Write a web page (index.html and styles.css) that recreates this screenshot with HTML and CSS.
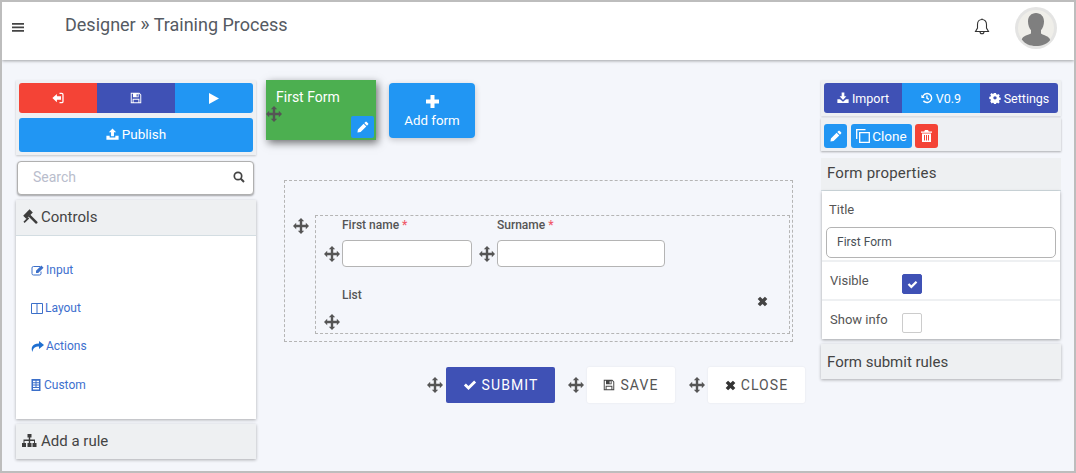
FILE: index.html
```html
<!DOCTYPE html>
<html lang="en">
<head>
<meta charset="utf-8">
<title>Designer</title>
<link rel="stylesheet" href="styles.css">
</head>
<body>
<svg class="defs" width="0" height="0" aria-hidden="true">
  <symbol id="i-move" viewBox="0 0 16 16"><path d="M8 0l3.200 3.200H9.200v3.600h3.600v-2L16 8l-3.200 3.200v-2H9.200v3.600h2L8 16l-3.200-3.200h2V9.200H3.200v2L0 8l3.200-3.200v2h3.600V3.200h-2z"/></symbol>
  <symbol id="i-pencil" viewBox="0 0 16 16"><path d="M11.200 1.200a1.200 1.200 0 0 1 1.700 0l1.900 1.900a1.200 1.200 0 0 1 0 1.700l-1.500 1.500-3.600-3.600zM8.800 3.600l3.600 3.600-7.600 7.600L.6 15.400l.6-4.200z"/></symbol>
  <symbol id="i-check" viewBox="0 0 16 16"><path d="M1 8.500l2.300-2.300 3 3L12.700 2.800 15 5.100 6.300 13.800z"/></symbol>
  <symbol id="i-times" viewBox="0 0 16 16"><path d="M1 4.500L4.500 1 8 4.500 11.500 1 15 4.500 11.500 8 15 11.500 11.500 15 8 11.500 4.500 15 1 11.500 4.500 8z"/></symbol>
  <symbol id="i-save" viewBox="0 0 16 16"><path fill-rule="evenodd" d="M1 1h11.500L15 3.500V15H1zM2.300 2.300v11.400h11.400V4L12 2.300zM4 2.300h7.500v4.700H4zM8.800 3v3h1.500V3zM3.500 9h9v4.700h-9zM4.800 10.300v3.400h6.400v-3.400z"/></symbol>
  <symbol id="i-upload" viewBox="0 0 16 16"><path d="M8 .5l4.500 4.700H9.800v5H6.200v-5H3.500zM.5 9.500h4v2.200h7V9.500h4v5H.5z"/></symbol>
  <symbol id="i-download" viewBox="0 0 16 16"><path d="M6.200.8h3.600v5h2.700L8 10.500 3.500 5.800h2.700zM.5 9.500h3.500L8 13l4-3.500h3.500v5H.5z"/></symbol>
  <symbol id="i-signin" viewBox="0 0 16 16"><path d="M6.500 2.500v3.200H12v4.600H6.500v3.200L.5 8z"/><path d="M10 1h3a2.500 2.500 0 0 1 2.500 2.500v9A2.500 2.500 0 0 1 13 15h-3v-1.700h3a.8.8 0 0 0 .8-.8v-9a.8.8 0 0 0-.8-.8h-3z"/></symbol>
  <symbol id="i-history" viewBox="0 0 16 16"><path d="M8 1a7 7 0 1 1-5.500 11.300l1.500-1.200A5.100 5.100 0 1 0 3.300 6.300L5 8H.5V3.500l1.500 1.500A7 7 0 0 1 8 1z"/><path d="M7 4.500h1.800v3.200l2.200 1.400-1 1.400L7 8.700z"/></symbol>
  <symbol id="i-cog" viewBox="0 0 16 16"><path fill-rule="evenodd" d="M6.500.5h3l.4 2.100 1.300.6 1.800-1.200 2.100 2.100-1.200 1.800.6 1.300 2 .4v3l-2.100.4-.5 1.300 1.200 1.800-2.100 2.100-1.800-1.200-1.300.5-.4 2.100h-3l-.4-2.100-1.300-.5-1.800 1.200L.9 12.800l1.200-1.800-.5-1.300L-.5 9.300v-3l2.100-.4.5-1.300L.9 2.800 3 .7l1.800 1.200 1.300-.5zM8 5.300a2.500 2.500 0 1 0 0 5 2.500 2.500 0 0 0 0-5z" transform="translate(.8 .8) scale(.9)"/></symbol>
</svg>

<header class="topbar">
  <svg class="menu" width="12" height="9" viewBox="0 0 12 9"><path d="M0 0h12v1.800H0zM0 3.500h12v1.800H0zM0 7h12v1.800H0z"/></svg>
  <h1 class="crumb">Designer <span class="sep">»</span> Training Process</h1>
  <svg class="bell" width="16" height="18" viewBox="0 0 16 18"><path d="M8 1.500c-2.800 0-4.500 2.200-4.500 5v3.500L1.500 13.500h13L12.500 10V6.500c0-2.800-1.700-5-4.500-5zM6 13.700a2 2 0 0 0 4 0" fill="none" stroke="#333" stroke-width="1.100"/><path d="M8 .5v1" stroke="#333"/></svg>
  <div class="avatar">
    <svg width="42" height="42" viewBox="0 0 42 42"><circle cx="21" cy="21" r="21" fill="#e4e4e3"/><circle cx="21" cy="21" r="18" fill="#efeee9"/><path d="M21 6c4.800 0 8 3.500 8 8.500 0 3.600-1.300 6.800-3 8.700v3.300c2.500 2 8 2.300 9.200 6.500C32 37 27 39 21 39S10 37 6.800 32.500C8 28.300 13.500 28 16 26.500v-3.300c-1.700-1.900-3-5.100-3-8.700C13 9.500 16.200 6 21 6z" fill="#7f7f7f"/></svg>
  </div>
</header>

<main class="workspace">
  <aside class="col-left">
    <div class="tools">
      <div class="btn-row">
        <button class="seg red"><svg class="ic12"><use href="#i-signin"/></svg></button>
        <button class="seg indigo"><svg class="ic12"><use href="#i-save"/></svg></button>
        <button class="seg blue"><svg width="10" height="11" viewBox="0 0 10 11" class="white"><path d="M0 0l10 5.500L0 11z"/></svg></button>
      </div>
      <button class="publish"><svg class="ic13"><use href="#i-upload"/></svg> Publish</button>
    </div>
    <div class="search">
      <span>Search</span>
      <svg width="12" height="12" viewBox="0 0 12 12"><circle cx="5" cy="5" r="3.700" fill="none" stroke="#444" stroke-width="1.700"/><path d="M7.800 7.800L11 11" stroke="#444" stroke-width="2"/></svg>
    </div>
    <section class="panel">
      <h2 class="panel-head">
        <svg width="16" height="15" viewBox="0 0 16 15"><g fill="#3d3d3d"><rect x="1.500" y="2.800" width="9" height="4.600" transform="rotate(-45 6 5.100)"/><path d="M6.500 7.500l1.800-1.800 7 7a1.300 1.300 0 0 1-1.800 1.800z"/><rect x="0" y="9.300" width="6.500" height="1.700" transform="rotate(-45 3.200 10.100) translate(0 1.500)"/></g></svg>
        Controls
      </h2>
      <ul class="control-list">
        <li><svg width="13" height="11" viewBox="0 0 13 11"><path d="M9 1.500H2.500a1.500 1.500 0 0 0-1.500 1.500v5.500a1.500 1.500 0 0 0 1.500 1.500h6A1.500 1.500 0 0 0 10 8.500V6.500" fill="none" stroke="#3b6fc9"/><path d="M5 5.800L10.300.5l2.200 2.200L7.200 8H5z" fill="#3b6fc9"/></svg>Input</li>
        <li><svg width="12" height="11" viewBox="0 0 12 11"><path d="M.5.500h11v10H.5zM6 .5v10" fill="none" stroke="#3b6fc9"/></svg>Layout</li>
        <li><svg width="13" height="11" viewBox="0 0 13 11"><path d="M8 0l5 4-5 4V5.500C4 5.500 2 7 1.500 11 0 8 0 2.800 8 2.500z" fill="#1f6fd0"/></svg>Actions</li>
        <li class="tight"><svg width="10" height="12" viewBox="0 0 10 12"><path fill-rule="evenodd" d="M.5 0h9v12h-9zM2 1.800v1.400h2.500V1.800zM5.500 1.800v1.400H8V1.800zM2 4.200v1.400h2.500V4.200zM5.500 4.200v1.400H8V4.200zM2 6.600v1.400h2.500V6.600zM5.500 6.600v1.400H8V6.600zM2 9v1.400h6V9z" fill="#3b6fc9"/></svg>Custom</li>
      </ul>
    </section>
    <h2 class="panel-head solo">
      <svg width="15" height="13" viewBox="0 0 15 13"><path d="M5.500 0h4v3.500H8.200v2h4.800V9h1.500v4h-4V9h1.500V7H8.200v2h1.300v4h-4V9h1.300V7H2.500v2H4v4H0V9h1.500V5.500h5.300v-2H5.500z" fill="#3d3d3d"/></svg>
      Add a rule
    </h2>
  </aside>

  <section class="col-center">
    <div class="tabs">
      <div class="form-tab">
        <span class="tab-title">First Form</span>
        <svg class="handle tab-handle"><use href="#i-move"/></svg>
        <button class="tab-edit"><svg class="ic12"><use href="#i-pencil"/></svg></button>
      </div>
      <button class="add-form">
        <svg width="13" height="13" viewBox="0 0 13 13" class="white"><path d="M4.500 0h4v4.500H13v4H8.500V13h-4V8.500H0v-4h4.500z"/></svg>
        <span>Add form</span>
      </button>
    </div>

    <div class="canvas">
      <div class="row-wrap">
        <svg class="handle row-handle"><use href="#i-move"/></svg>
        <div class="row">
          <div class="fields">
            <div class="field f1">
              <label>First name <i>*</i></label>
              <div class="input-line"><svg class="handle"><use href="#i-move"/></svg><div class="box w1"></div></div>
            </div>
            <div class="field f2">
              <label>Surname <i>*</i></label>
              <div class="input-line"><svg class="handle"><use href="#i-move"/></svg><div class="box w2"></div></div>
            </div>
          </div>
          <div class="list-field">
            <label>List</label>
            <svg class="handle list-handle"><use href="#i-move"/></svg>
            <svg class="remove"><use href="#i-times"/></svg>
          </div>
        </div>
      </div>
    </div>

    <div class="actions">
      <svg class="handle"><use href="#i-move"/></svg>
      <button class="action submit"><svg class="ic14"><use href="#i-check"/></svg>SUBMIT</button>
      <svg class="handle gap-l"><use href="#i-move"/></svg>
      <button class="action plain"><svg class="ic12"><use href="#i-save"/></svg>SAVE</button>
      <svg class="handle gap-l2"><use href="#i-move"/></svg>
      <button class="action plain close"><svg class="ic11"><use href="#i-times"/></svg>CLOSE</button>
    </div>
  </section>

  <aside class="col-right">
    <div class="bar">
      <div class="btn-row">
        <button class="seg small indigo"><svg class="ic12"><use href="#i-download"/></svg>Import</button>
        <button class="seg small blue"><svg class="ic12"><use href="#i-history"/></svg>V0.9</button>
        <button class="seg small indigo"><svg class="ic12"><use href="#i-cog"/></svg>Settings</button>
      </div>
    </div>
    <div class="bar grey">
      <button class="mini blue"><svg class="ic12"><use href="#i-pencil"/></svg></button>
      <button class="mini blue wide">
        <svg width="14" height="14" viewBox="0 0 14 14"><path d="M.7 10V.7H9.500M3.700 3.700h9.600v9.600H3.700z" fill="none" stroke="#fff" stroke-width="1.300"/></svg>Clone</button>
      <button class="mini red"><svg width="11" height="12" viewBox="0 0 11 12"><path fill-rule="evenodd" d="M4 0h3l.8 1.500H11v1.300H0V1.500h3.200zM1 3.500h9V12H1zM3 5v5.500h1V5zM5 5v5.500h1V5zM7 5v5.500h1V5z" fill="#fff"/></svg></button>
    </div>
    <h2 class="panel-head prop-head">Form properties</h2>
    <div class="props">
      <div class="prop p-title">
        <label>Title</label>
        <div class="title-input">First Form</div>
      </div>
      <div class="prop p-check">
        <label>Visible</label>
        <span class="check on"><svg class="ic11"><use href="#i-check"/></svg></span>
      </div>
      <div class="prop p-check p-last">
        <label>Show info</label>
        <span class="check"></span>
      </div>
    </div>
    <h2 class="panel-head solo prop-foot">Form submit rules</h2>
  </aside>
</main>
</body>
</html>
```

FILE: styles.css
```css
* { box-sizing: border-box; }
html, body { height: 100%; }
body {
  margin: 0;
  height: 473px;
  overflow: hidden;
  border: 2px solid #bdbdbd;
  background: #f4f6fb;
  font-family: Roboto, "Liberation Sans", sans-serif;
  color: #495057;
}
button { font-family: inherit; border: 0; padding: 0; cursor: pointer; color: #fff; }
h1, h2, ul { margin: 0; padding: 0; font-weight: 400; }
li { list-style: none; }
.defs { position: absolute; }
.white { fill: #fff; }
.ic11 { width: 11px; height: 11px; }
.ic12 { width: 12px; height: 12px; fill: #fff; }
.ic13 { width: 13px; height: 13px; fill: #fff; }
.ic14 { width: 14px; height: 14px; fill: #fff; }

.topbar {
  height: 58px;
  background: #fff;
  box-shadow: 0 1px 3px rgba(0,0,0,.35);
  display: flex;
  align-items: flex-start;
  position: relative;
}
.menu { fill: #444; margin: 21px 0 0 10px; }
.crumb { font-size: 18px; line-height: 24px; margin: 11px 0 0 41px; color: #555a62; flex: 1; }
.sep { font-size: 20px; line-height: 1; }
.bell { margin: 16px 25px 0 0; }
.avatar { margin: 5px 17px 0 0; width: 42px; height: 42px; }
.avatar svg { display: block; }

.workspace { display: flex; align-items: flex-start; padding: 20px 13px 0 14px; }

.col-left { width: 240px; flex: none; }
.tools { background: #eef0f3; padding: 3px; box-shadow: 0 1px 2px rgba(0,0,0,.2); height: 75px; }
.btn-row { display: flex; border-radius: 3px; overflow: hidden; }
.seg {
  flex: 1;
  height: 30px;
  display: flex;
  align-items: center;
  justify-content: center;
  gap: 3px;
}
.seg.small { font-size: 12.500px; font-weight: 400; }
.red { background: #f44336; }
.indigo { background: #3f51b5; }
.blue { background: #2196f3; }
.publish {
  width: 100%;
  height: 34px;
  margin-top: 5px;
  padding-bottom: 2px;
  background: #2196f3;
  border-radius: 3px;
  font-size: 13.500px;
  font-weight: 400;
  display: flex;
  align-items: center;
  justify-content: center;
  gap: 3px;
}
.search {
  margin: 6px 2px 0 1px;
  height: 34px;
  background: #fff;
  border: 1px solid #b0b0b0;
  border-radius: 4px;
  box-shadow: 0 1px 2px rgba(0,0,0,.35);
  display: flex;
  align-items: center;
  justify-content: space-between;
  padding: 0 8px 2px 15px;
  font-size: 14px;
  color: #b9bdcc;
}
.panel { margin-top: 5px; background: #fff; box-shadow: 0 1px 3px rgba(0,0,0,.3); }
.panel-head {
  height: 36px;
  background: #eef0f2;
  border-bottom: 1px solid #d3dde2;
  font-size: 15px;
  display: flex;
  align-items: center;
  gap: 3px;
  padding: 0 0 2px 6px;
  color: #444;
}
.panel-head.solo { border-bottom: 0; margin-top: 5px; box-shadow: 0 1px 3px rgba(0,0,0,.3); height: 35px; gap: 4px; }
.control-list { height: 183px; padding: 15px 0 0 15px; font-size: 12px; color: #3d6fce; }
.control-list li { height: 38px; display: flex; align-items: center; gap: 2px; }
.control-list li svg { flex: none; }
.control-list li.tight { margin-top: 1px; gap: 3px; }

.col-center { flex: 1; min-width: 0; padding-left: 10px; }
.tabs { display: flex; align-items: flex-start; height: 100px; }
.form-tab {
  position: relative;
  width: 110px;
  height: 60px;
  background: #4caf50;
  box-shadow: 2px 3px 8px rgba(0,0,0,.55);
  color: #fff;
  font-size: 14px;
}
.tab-title { display: block; padding: 9px 0 0 10px; line-height: 16px; }
.handle { width: 16px; height: 16px; fill: #555; flex: none; display: block; }
.tab-handle { position: absolute; left: 0; top: 26px; }
.tab-edit {
  position: absolute;
  right: 2px;
  bottom: 2px;
  width: 23px;
  height: 22px;
  background: #2196f3;
  border-radius: 2px;
  display: flex;
  align-items: center;
  justify-content: center;
}
.add-form {
  margin: 3px 0 0 13px;
  width: 86px;
  height: 55px;
  background: #2196f3;
  border-radius: 4px;
  box-shadow: 0 2px 6px rgba(0,0,0,.2);
  font-size: 13.300px;
  font-weight: 400;
  display: flex;
  flex-direction: column;
  align-items: center;
  gap: 5px;
  padding-top: 12px;
}
.canvas {
  margin-left: 18px;
  width: 509px;
  height: 162px;
  border: 1px dashed #b5b5b5;
  padding: 34px 2px 0 8px;
}
.row-wrap { display: flex; align-items: flex-start; gap: 6px; }
.row-handle { margin-top: 3px; }
.row { flex: 1; height: 119px; border: 1px dashed #b5b5b5; padding-left: 8px; }
.fields { display: flex; }
.field label, .list-field label {
  display: block;
  font-size: 12px;
  font-weight: 500;
  line-height: 14px;
  color: #555;
  padding-left: 18px;
}
.field label { margin-top: 2px; }
.field label i { font-style: normal; color: #f05a6a; }
.input-line { display: flex; align-items: center; gap: 2px; margin-top: 8px; }
.box { height: 27px; background: #fff; border: 1px solid #b4b4b4; border-radius: 4px; }
.w1 { width: 130px; }
.w2 { width: 168px; margin-left: 0; }
.f2 { margin-left: 7px; }
.list-field { position: relative; margin-top: 21px; }
.list-handle { margin-top: 12px; }
.remove { position: absolute; right: 21px; top: 8px; width: 11px; height: 11px; fill: #444; }

.actions { display: flex; align-items: center; margin: 25px 0 0 161px; }
.action {
  height: 36px;
  border-radius: 2px;
  font-size: 14px;
  font-weight: 400;
  letter-spacing: 1.100px;
  display: flex;
  align-items: center;
  justify-content: center;
  gap: 5px;
}
.submit { width: 109px; background: #3f51b5; margin-left: 3px; }
.plain { background: #fff; color: #555; width: 88px; box-shadow: 0 0 2px rgba(0,0,0,.08); }
.plain .ic12 { fill: #444; }
.plain .ic11 { fill: #333; }
.close { width: 97px; }
.gap-l { margin-left: 13px; margin-right: 3px; }
.gap-l2 { margin-left: 14px; margin-right: 3px; }

.col-right { width: 240px; flex: none; }
.bar { background: #eef0f3; padding: 3px; height: 36px; box-shadow: 0 1px 2px rgba(0,0,0,.15); }
.bar.grey {
  margin-top: 2px;
  height: 33px;
  padding: 6px 3px 0;
  display: flex;
  gap: 4px;
  box-shadow: 0 1px 2px rgba(0,0,0,.3);
}
.mini {
  height: 24px;
  width: 23px;
  border-radius: 3px;
  display: flex;
  align-items: center;
  justify-content: center;
  font-size: 13.500px;
  font-weight: 400;
  gap: 2px;
}
.mini.wide { width: 61px; }
.mini.red { margin-left: -1px; }
.prop-head { margin-top: 7px; height: 33px; font-size: 15px; letter-spacing: .2px; }
.props { background: #fff; box-shadow: 0 1px 3px rgba(0,0,0,.35); margin: 0 1px; padding-top: 0; }
.prop { font-size: 13px; color: #555; }
.prop label { display: block; }
.p-title { height: 71px; padding: 11px 4px 0; border-bottom: 2px solid #eef0f2; }
.p-title label { padding-left: 3px; line-height: 16px; }
.title-input {
  height: 31px;
  margin-top: 9px;
  margin-left: 0;
  border: 1px solid #b4b4b4;
  border-radius: 5px;
  font-size: 12px;
  line-height: 29px;
  padding-left: 10px;
  color: #495057;
}
.p-check {
  height: 39px;
  display: flex;
  align-items: flex-start;
  padding: 11px 0 0 8px;
  border-bottom: 2px solid #eef0f2;
}
.p-check.p-last { border-bottom: 0; height: 38px; }
.p-check label { width: 72px; line-height: 16px; }
.check {
  width: 20px;
  height: 20px;
  margin-top: 1px;
  border: 1px solid #ccc;
  border-radius: 2px;
  display: flex;
  align-items: center;
  justify-content: center;
}
.check.on { background: #3f51b5; border-color: #3f51b5; }
.check.on svg { fill: #fff; }
.panel-head.prop-foot { margin-top: 5px; padding-bottom: 0; }
```
